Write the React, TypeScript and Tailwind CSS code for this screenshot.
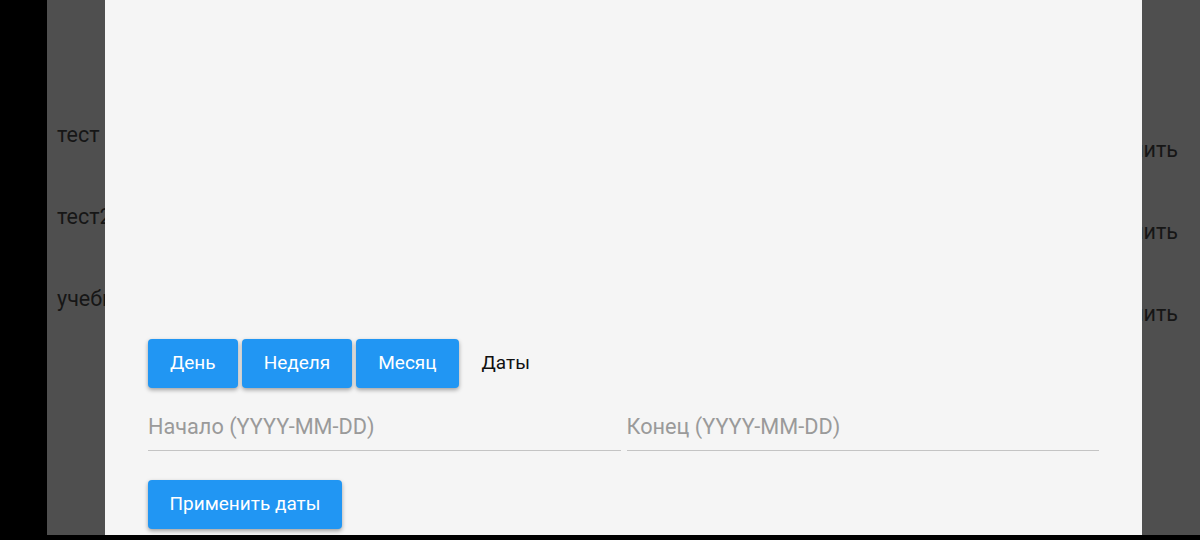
const rows = [
  { name: "тест", top: "mt-[123px]" },
  { name: "тест2", top: "mt-[58px]" },
  { name: "учебник", top: "mt-[58px]" },
];

const ranges = ["День", "Неделя", "Месяц"];

export default function App() {
  return (
    <div className="w-[1200px] h-[540px] bg-black flex flex-col overflow-hidden font-['Roboto',sans-serif]">
      <div className="flex flex-1 min-h-0">
        <div className="w-[47px] bg-black" />
        {/* dimmed list page behind the dialog */}
        <div className="relative flex-1 bg-[#4f4f4f] text-[#161616] text-[21.5px]">
          <div className="flex flex-col">
            {rows.map((r) => (
              <div key={r.name} className={`${r.top} flex justify-between pl-[10px] pr-[22px] h-[24px] leading-[24px]`}>
                <span>{r.name}</span>
                <span className="mt-[15px]">Удалить</span>
              </div>
            ))}
          </div>

          {/* dialog */}
          <div className="absolute left-[58px] top-0 bottom-0 w-[1037px] bg-[#f5f5f5] flex flex-col justify-end px-[43px] pb-[6px]">
            <div className="flex items-center gap-[4px]">
              {ranges.map((r) => (
                <button
                  key={r}
                  className="h-[49px] px-[22px] rounded-[4px] bg-[#2196f3] text-white text-[19px] shadow-[0_2px_4px_rgba(0,0,0,0.35)]"
                >
                  {r}
                </button>
              ))}
              <button className="h-[49px] pl-[19px] pr-[22px] text-[19px] text-[#111]">Даты</button>
            </div>

            <div className="flex gap-[6px] mt-[17px]">
              <div className="flex-1 h-[46px] border-b border-[#c4c4c4] flex items-center">
                <span className="text-[21.7px] text-[#9a9a9a]">Начало (YYYY-MM-DD)</span>
              </div>
              <div className="flex-1 h-[46px] border-b border-[#c4c4c4] flex items-center">
                <span className="text-[21.7px] text-[#9a9a9a]">Конец (YYYY-MM-DD)</span>
              </div>
            </div>

            <div className="mt-[29px]">
              <button className="h-[49px] w-[194px] rounded-[4px] bg-[#2196f3] text-white text-[19px] shadow-[0_2px_4px_rgba(0,0,0,0.35)]">
                Применить даты
              </button>
            </div>
          </div>
        </div>
      </div>
      <div className="h-[5px] bg-black" />
    </div>
  );
}
